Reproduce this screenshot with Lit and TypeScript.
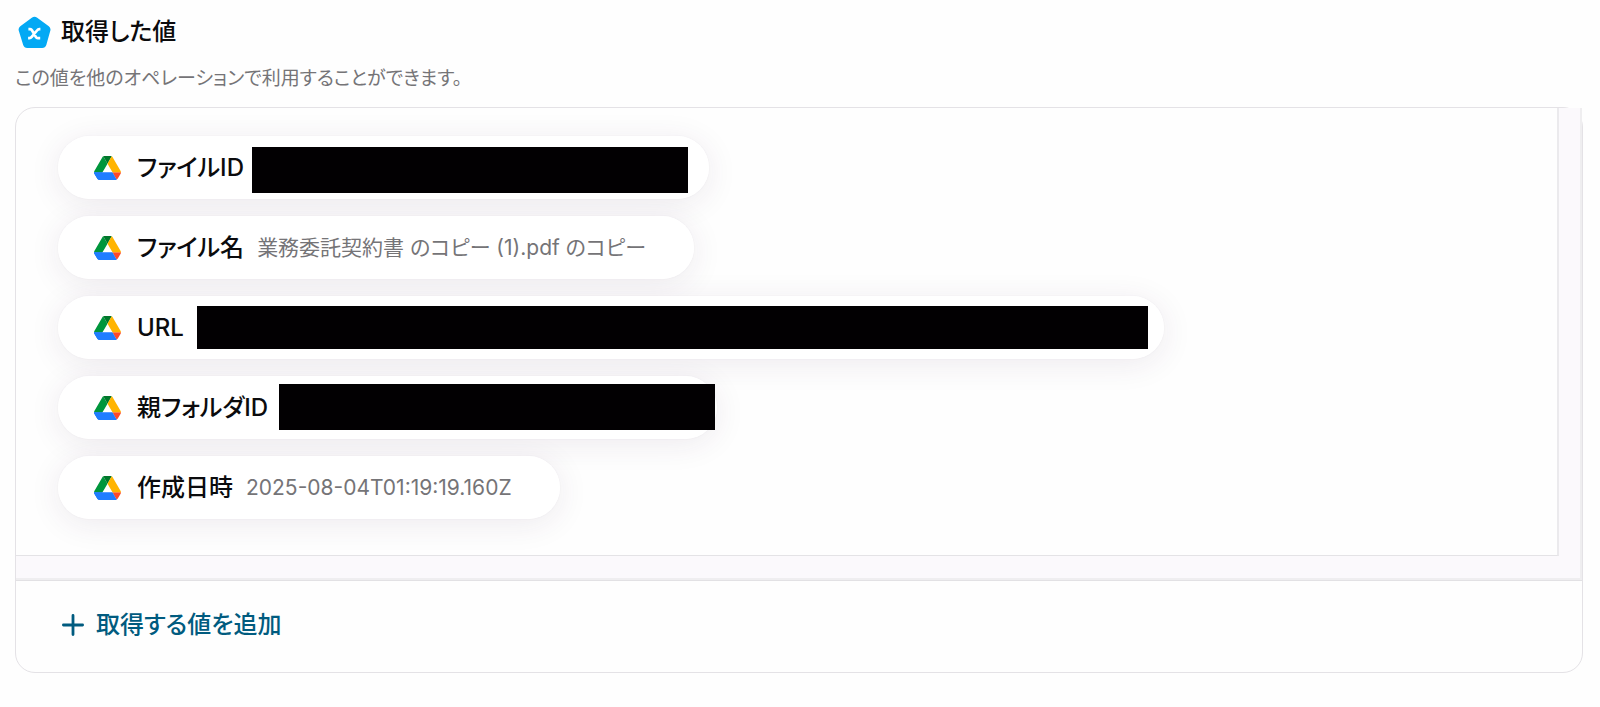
import { LitElement, html, css, svg, nothing } from "lit";
import { customElement, property } from "lit/decorators.js";
import { styleMap } from "lit/directives/style-map.js";

interface Mask {
  slot: number;
  left: number;
  top: number;
  width: number;
  height: number;
}

interface Entry {
  label: string;
  value?: string;
  mask?: Mask;
}

const ENTRIES: Entry[] = [
  { label: "ファイルID", mask: { slot: 404, left: -5, top: 11, width: 436, height: 46 } },
  { label: "ファイル名", value: "業務委託契約書 のコピー (1).pdf のコピー" },
  { label: "URL", mask: { slot: 919, left: 0, top: 10, width: 951, height: 43 } },
  { label: "親フォルダID", mask: { slot: 388, left: -2, top: 8, width: 436, height: 46 } },
  { label: "作成日時", value: "2025-08-04T01:19:19.160Z" },
];

const driveIcon = svg`
  <path fill="#0066da" d="m6.6 66.85 3.85 6.65c.8 1.4 1.95 2.5 3.3 3.3l13.75-23.8h-27.5c0 1.55.4 3.1 1.2 4.5z"/>
  <path fill="#00963c" d="m43.65 25-13.75-23.8c-1.35.8-2.5 1.9-3.3 3.3l-25.4 44a9.06 9.06 0 0 0 -1.2 4.5h27.5z"/>
  <path fill="#ff4a2b" d="m73.55 76.8c1.35-.8 2.5-1.9 3.3-3.3l1.6-2.75 7.65-13.25c.8-1.4 1.2-2.95 1.2-4.5h-27.502l5.852 11.5z"/>
  <path fill="#00772b" d="m43.65 25 13.75-23.8c-1.35-.8-2.9-1.2-4.5-1.2h-18.5c-1.6 0-3.15.45-4.5 1.2z"/>
  <path fill="#1f7cff" d="m59.8 53h-59.8c0 1.55.4 3.1 1.2 4.5l9.25 16c.8 1.4 1.95 2.5 3.3 3.3 1.35.8 2.9 1.2 4.5 1.2h50.8c1.6 0 3.15-.45 4.5-1.2z"/>
  <path fill="#ffb400" d="m73.4 26.5-12.7-22c-.8-1.4-1.95-2.5-3.3-3.3l-13.75 23.8 16.15 28h27.45c0-1.55-.4-3.1-1.2-4.5z"/>
`;

@customElement("value-chip")
export class ValueChip extends LitElement {
  @property({ attribute: false }) entry!: Entry;

  static styles = css`
    :host {
      display: flex;
      position: relative;
      width: fit-content;
      height: 63px;
      box-sizing: border-box;
      align-items: center;
      padding: 0 48px 0 36px;
      border-radius: 32px;
      background: #fff;
    }
    .icon {
      width: 27px;
      height: 24px;
      flex: none;
      margin-right: 16px;
    }
    .label {
      font-size: 24px;
      line-height: 32px;
      font-weight: 500;
      color: #0b0b0d;
      margin-right: 13px;
      white-space: nowrap;
    }
    .value {
      font-size: 21px;
      line-height: 32px;
      color: #757477;
      white-space: nowrap;
    }
    .slot {
      position: relative;
      align-self: stretch;
    }
    .mask {
      position: absolute;
      background: #020002;
    }
  `;

  render() {
    const { label, value, mask } = this.entry;
    return html`
      <svg class="icon" viewBox="0 0 87.3 78" preserveAspectRatio="none" aria-hidden="true">${driveIcon}</svg>
      <span class="label">${label}</span>
      ${value ? html`<span class="value">${value}</span>` : nothing}
      ${mask
        ? html`<span class="slot" style=${styleMap({ width: `${mask.slot}px` })}>
            <span
              class="mask"
              style=${styleMap({
                left: `${mask.left}px`,
                top: `${mask.top}px`,
                width: `${mask.width}px`,
                height: `${mask.height}px`,
              })}
            ></span>
          </span>`
        : nothing}
    `;
  }
}

@customElement("app-root")
export class AppRoot extends LitElement {
  static styles = css`
    :host {
      display: block;
      box-sizing: border-box;
      min-height: 100vh;
      padding: 15px 17px 34px 15px;
      background: #fefefe;
      color: #0b0b0d;
      font-family: Inter, "Noto Sans CJK JP", sans-serif;
      font-feature-settings: "palt";
    }
    .head {
      display: flex;
      align-items: center;
      gap: 10px;
      height: 34px;
      padding-left: 3px;
    }
    .badge {
      width: 33px;
      height: 33px;
      flex: none;
    }
    .title {
      margin: 0;
      font-size: 24px;
      line-height: 32px;
      font-weight: 500;
    }
    .note {
      margin: 17px 0 15px;
      font-size: 19px;
      line-height: 26px;
      color: #757477;
    }
    .panel {
      border: 1px solid #e4e2e6;
      border-radius: 20px;
    }
    .scroller {
      display: grid;
      grid-template-columns: 1fr 23px;
      grid-template-rows: auto 24px;
      border-bottom: 1px solid #e2e1e4;
    }
    .list {
      display: flex;
      flex-direction: column;
      gap: 17px;
      margin: 0;
      padding: 28px 42px 36px;
      list-style: none;
      border-right: 2px solid #ebeaed;
      border-bottom: 1px solid #e4e3e6;
      border-top-left-radius: 19px;
    }
    .item {
      width: fit-content;
      border-radius: 32px;
      box-shadow: 0 5px 32px rgba(70, 35, 75, 0.09), 0 0 2px rgba(70, 35, 75, 0.06);
    }
    .track-y {
      background: #fbf9fc;
      border-right: 2px solid #efeef0;
    }
    .track-x {
      grid-column: 1 / -1;
      background: #fbf9fc;
      border-right: 2px solid #efeef0;
      border-bottom: 2px solid #efeef0;
    }
    .foot {
      padding: 24px 46px 27px;
    }
    .add {
      display: flex;
      align-items: center;
      gap: 12px;
      height: 40px;
      padding: 0;
      border: 0;
      background: none;
      color: #005b7f;
      font: inherit;
      font-feature-settings: inherit;
      font-size: 24px;
      line-height: 32px;
      font-weight: 500;
      cursor: pointer;
    }
    .plus {
      width: 22px;
      height: 22px;
    }
  `;

  render() {
    return html`
      <header class="head">
        <svg class="badge" viewBox="0 0 33 33" aria-hidden="true">
          <path
            fill="#03a9f4"
            d="M13.8 1.7Q16.5 0 19.2 1.7L30.8 10.2Q33.1 12 32.3 14.8L28.3 29Q27.3 32 24.2 32H9.2Q6.2 32 5.2 29L.8 14.8Q0 12 2.3 10.2Z"
          />
          <path
            fill="none"
            stroke="#fff"
            stroke-width="2.7"
            d="M10.4 13.2h1.7c1 0 1.5.4 2 1.3l3.7 6.4c.5.9 1 1.3 2 1.3h2.4M22.4 13.2h-1.1c-1 0-1.6.4-2.3 1.3l-5.3 6.4c-.7.9-1.3 1.3-2.3 1.3h-1.3"
          />
        </svg>
        <h1 class="title">取得した値</h1>
      </header>
      <p class="note">この値を他のオペレーションで利用することができます。</p>
      <section class="panel">
        <div class="scroller">
          <ul class="list">
            ${ENTRIES.map((entry) => html`<li class="item"><value-chip .entry=${entry}></value-chip></li>`)}
          </ul>
          <div class="track-y"></div>
          <div class="track-x"></div>
        </div>
        <div class="foot">
          <button class="add" type="button">
            <svg class="plus" viewBox="0 0 22 22" aria-hidden="true">
              <path stroke="#005b7f" stroke-width="2.8" stroke-linecap="round" d="M11 1.4v19.2M1.4 11h19.2" />
            </svg>
            <span>取得する値を追加</span>
          </button>
        </div>
      </section>
    `;
  }
}
